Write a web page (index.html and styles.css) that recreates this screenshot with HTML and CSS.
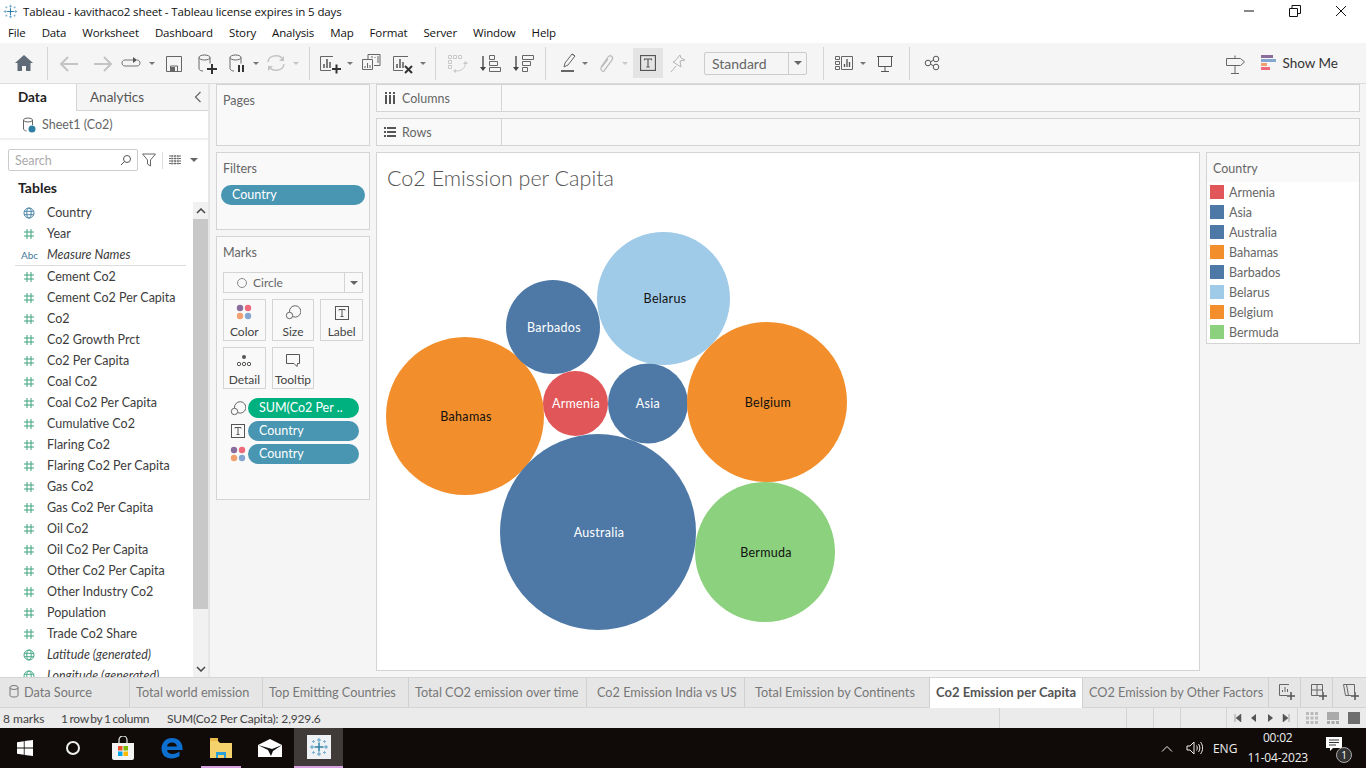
FILE: index.html
```html
<!DOCTYPE html>
<html lang="en">
<head>
  <meta charset="UTF-8" />
  <title>Tableau - kavithaco2 sheet</title>
  <link rel="stylesheet" href="styles.css">
</head>
<body>

  <svg class="defs" width="0" height="0">
    <symbol id="hash" viewBox="0 0 12 12"><path d="M4 1v10M8 1v10M1 4h10M1 8h10" fill="none" stroke="#3fa27f" stroke-width="1"/></symbol>
    <symbol id="globe" viewBox="0 0 12 12"><g fill="none" stroke="currentColor"><circle cx="6" cy="6" r="5"/><ellipse cx="6" cy="6" rx="2.2" ry="5"/><path d="M1 4.3h10M1 7.7h10"/></g></symbol>
    <symbol id="dots" viewBox="0 0 16 16"><circle cx="4" cy="4" r="3.2" fill="#8a6d9c"/><circle cx="12" cy="4" r="3.2" fill="#ef6a7a"/><circle cx="4" cy="12" r="3.2" fill="#f2a06f"/><circle cx="12" cy="12" r="3.2" fill="#84a7d2"/></symbol>
    <symbol id="sizes" viewBox="0 0 16 16"><g fill="none" stroke="#666"><path d="M4.500 8.200a5.700 5.700 0 1 1 3.500 4.500"/><circle cx="4.500" cy="11.500" r="3.200"/></g></symbol>
    <symbol id="tbox" viewBox="0 0 14 14"><rect x=".5" y=".5" width="13" height="13" fill="none" stroke="#555"/><path d="M4 4.500V3.500h6v1M7 3.500v7M5.500 10.500h3" fill="none" stroke="#555"/></symbol>
    <symbol id="cyl" viewBox="0 0 14 20"><g fill="none" stroke="#666"><ellipse cx="6.500" cy="3.500" rx="5.500" ry="2.500"/><path d="M1 3.500v11c0 1.500 2 2.500 4 2.500M12 3.500v6"/></g></symbol>
    <symbol id="tableau" viewBox="0 0 20 20">
      <path d="M10 5.500v9M5.500 10h9" stroke="#2f7fa5" stroke-width="1.500"/>
      <path d="M10 1v4M8 3h4M10 15v4M8 17h4M1 10h4M3 8v4M15 10h4M17 8v4" stroke="#5b9cc4"/>
      <path d="M4.500 3v3M3 4.500h3M15.500 3v3M14 4.500h3M4.500 14v3M3 15.500h3M15.500 14v3M14 15.500h3" stroke="#7fb2cf"/>
    </symbol>
  </svg>

  <div class="titlebar">
    <svg width="15" height="15" class="app-logo"><use href="#tableau" width="15" height="15"/></svg>
    <span class="title-text">Tableau - kavithaco2 sheet - Tableau license expires in 5 days</span>
    <div class="win-btns">
      <svg width="12" height="12" viewBox="0 0 12 12"><path d="M1 6h10" stroke="#111"/></svg>
      <svg width="12" height="12" viewBox="0 0 12 12"><path d="M.5 3.500h8v8h-8zM3 3.500v-3h8.500v8H8.500" fill="none" stroke="#111"/></svg>
      <svg width="12" height="12" viewBox="0 0 12 12"><path d="M1 1l10 10M11 1L1 11" stroke="#111"/></svg>
    </div>
  </div>

  <nav class="menubar">
    <span>File</span><span>Data</span><span>Worksheet</span><span>Dashboard</span><span>Story</span><span>Analysis</span><span>Map</span><span>Format</span><span>Server</span><span>Window</span><span>Help</span>
  </nav>

  <div class="toolbar">
    <svg width="32" height="24" viewBox="0 0 32 24"><path d="M16 4l9 8h-2.500v8h-4.500v-5h-4v5H9.500v-8H7z" fill="#5f6b76"/></svg>
    <i class="sep"></i>
    <svg width="32" height="24" viewBox="0 0 32 24"><path d="M24 13H8M14 6l-7 7 7 7" fill="none" stroke="#c4c4c4" stroke-width="2"/></svg>
    <svg width="32" height="24" viewBox="0 0 32 24"><path d="M8 13h16M18 6l7 7-7 7" fill="none" stroke="#c4c4c4" stroke-width="2"/></svg>
    <svg width="26" height="24" viewBox="0 0 26 24"><path d="M17 9H7c-4 0-4 6 0 6h12c4 0 4-6 0-6" fill="none" stroke="#777"/><path d="M15 6l4 3-4 3z" fill="#555"/></svg>
    <svg class="caret" width="16" height="24" viewBox="0 0 16 24"><path d="M5 11h6l-3 3z" fill="#777"/></svg>
    <svg width="28" height="24" viewBox="0 0 28 24"><path d="M6.500 5.500h15v15h-15zM10.500 20v-5h7v5" fill="none" stroke="#666"/><rect x="11" y="16" width="4" height="4" fill="#666"/></svg>
    <svg width="34" height="24" viewBox="0 0 34 24"><use href="#cyl" x="10" y="3" width="14" height="20"/><path d="M19 18h10M24 13v10" stroke="#333" stroke-width="2"/></svg>
    <svg width="28" height="24" viewBox="0 0 28 24"><use href="#cyl" x="7" y="3" width="14" height="20"/><path d="M17 14v7M21 14v7" stroke="#333" stroke-width="2"/></svg>
    <svg class="caret" width="12" height="24" viewBox="0 0 12 24"><path d="M3 11h6l-3 3z" fill="#777"/></svg>
    <svg width="28" height="24" viewBox="0 0 28 24"><g fill="none" stroke="#c4c4c4" stroke-width="1.500"><path d="M6 11c1-8 13-8 15-2M22 13c-1 8-13 8-15 2"/></g><path d="M22 5v5h-5zM6 20v-5h5z" fill="#c4c4c4"/></svg>
    <svg class="caret" width="12" height="24" viewBox="0 0 12 24"><path d="M3 11h6l-3 3z" fill="#c4c4c4"/></svg>
    <i class="sep"></i>
    <svg width="28" height="24" viewBox="0 0 28 24"><path d="M17 5.500H4.500v14H15" fill="none" stroke="#666"/><path d="M8 17v-4M11 17V8M14 17v-6" stroke="#555" stroke-width="1.500"/><path d="M16 18h9M20.500 13.500v9" stroke="#333" stroke-width="2"/></svg>
    <svg class="caret" width="12" height="24" viewBox="0 0 12 24"><path d="M3 11h6l-3 3z" fill="#777"/></svg>
    <svg width="30" height="24" viewBox="0 0 30 24"><path d="M12 8V3.500h12v11h-6M6.500 8.500h10v10h-10z" fill="none" stroke="#666"/><path d="M16 7V5M19 7V6M22 12V5M9 17v-2M11.500 17v-5M14 17v-3" stroke="#666"/></svg>
    <svg width="32" height="24" viewBox="0 0 32 24"><path d="M22 5.500H7.500v14H17" fill="none" stroke="#666"/><path d="M11 17v-4M14 17V8M17 17v-6" stroke="#555" stroke-width="1.500"/><path d="M19 15l7 7M26 15l-7 7" stroke="#333" stroke-width="2"/></svg>
    <svg class="caret" width="10" height="24" viewBox="0 0 10 24"><path d="M2 11h6l-3 3z" fill="#777"/></svg>
    <i class="sep"></i>
    <svg width="30" height="24" viewBox="0 0 30 24"><g fill="none" stroke="#c9c9c9"><path d="M6.500 4.500h3v3h-3zM11.500 4.500h3v3h-3zM16.500 4.500h3v3h-3zM6.500 9.500h3v3h-3zM6.500 14.500h3v3h-3z"/><path d="M23 11c1 5-2 9-9 9"/></g><path d="M21 13h5l-2.500-3zM14 18v4l-3-2z" fill="#c9c9c9"/></svg>
    <svg width="36" height="24" viewBox="0 0 36 24"><path d="M11 5v13" stroke="#555" stroke-width="1.500"/><path d="M8 16h6l-3 4z" fill="#444"/><path d="M17.500 4.500h5v4h-5zM17.500 10.500h8v4h-8zM17.500 16.500h11v4h-11z" fill="none" stroke="#666"/></svg>
    <svg width="30" height="24" viewBox="0 0 30 24"><path d="M8 5v13" stroke="#555" stroke-width="1.500"/><path d="M5 16h6l-3 4z" fill="#444"/><path d="M14.500 4.500h11v4h-11zM14.500 10.500h8v4h-8zM14.500 16.500h5v4h-5z" fill="none" stroke="#666"/></svg>
    <i class="sep"></i>
    <svg width="28" height="24" viewBox="0 0 28 24"><path d="M12 16l1-4 7-9 3 2-7 9zM20 3l3 2" fill="none" stroke="#666"/><path d="M9 20h13" stroke="#666" stroke-width="2"/></svg>
    <svg class="caret" width="10" height="24" viewBox="0 0 10 24"><path d="M2 11h6l-3 3z" fill="#777"/></svg>
    <svg width="30" height="24" viewBox="0 0 30 24"><path d="M11 16l7-10c2-3 6 0 4 3l-8 11c-1 1-4-1-3-3l7-9" fill="none" stroke="#bdbdbd" stroke-width="1.300"/></svg>
    <svg class="caret" width="10" height="24" viewBox="0 0 10 24"><path d="M2 11h6l-3 3z" fill="#c9c9c9"/></svg>
    <span class="tool-on"><svg width="16" height="16"><use href="#tbox" width="16" height="16"/></svg></span>
    <svg width="28" height="24" viewBox="0 0 28 24"><path d="M8 21l5-6M12 10l5-6 1 3 4 2-5 1 1 6-8-5z" fill="none" stroke="#b5b5b5"/></svg>
    <div class="dropdown"><span>Standard</span><b><i class="tri"></i></b></div>
    <i class="sep"></i>
    <svg width="28" height="24" viewBox="0 0 28 24"><path d="M5.500 5.500h4v3h-4zM5.500 10.500h4v3h-4zM5.500 15.500h4v3h-4zM11.500 5.500h11v13h-11z" fill="none" stroke="#666"/><path d="M14.500 16v-3M17 16V8M19.500 16v-5" stroke="#555" stroke-width="1.300"/></svg>
    <svg class="caret" width="10" height="24" viewBox="0 0 10 24"><path d="M2 11h6l-3 3z" fill="#777"/></svg>
    <svg width="34" height="24" viewBox="0 0 34 24"><path d="M9 5.500h16M10.500 5.500v10h13v-10M17 15.500v5M13 20.500h8" fill="none" stroke="#555"/></svg>
    <i class="sep"></i>
    <svg width="32" height="24" viewBox="0 0 32 24"><g fill="none" stroke="#555"><circle cx="12" cy="12" r="2.800"/><circle cx="20" cy="8" r="2.800"/><circle cx="20" cy="16" r="2.800"/><path d="M14.500 10.700l3-1.400M14.500 13.300l3 1.400"/></g></svg>
    <div class="toolbar-right">
      <svg width="32" height="24" viewBox="0 0 32 24"><path d="M7.500 7.500h14l4 3.500-4 3.500h-14zM16 7.500v-3M16 14.500v8M12 22.500h8" fill="none" stroke="#666"/></svg>
      <div class="show-me">
        <svg width="16" height="16" viewBox="0 0 16 16"><path d="M0 0h12v3H0z" fill="#8a6d9c"/><path d="M0 4h15v3H0z" fill="#84a7d2"/><path d="M0 8h6v3H0z" fill="#f2a06f"/><path d="M0 12h9v3H0z" fill="#ef6a7a"/></svg>
        <span>Show Me</span>
      </div>
    </div>
  </div>

  <main class="workspace">
    <aside class="side">
      <div class="side-tabs">
        <div class="side-tab active">Data</div>
        <div class="side-tab">Analytics
          <svg class="chev" width="8" height="12" viewBox="0 0 8 12"><path d="M6.500 1L1.500 6l5 5" fill="none" stroke="#666" stroke-width="1.200"/></svg>
        </div>
      </div>
      <div class="source">
        <svg width="14" height="16" viewBox="0 0 14 16"><g fill="none" stroke="#666"><ellipse cx="6" cy="3" rx="4.500" ry="2"/><path d="M1.500 3v9c0 1 2 2 3 2M10.500 3v5"/></g><circle cx="10" cy="12" r="3.500" fill="#2f7fa5"/></svg>
        <span>Sheet1 (Co2)</span>
      </div>
      <div class="search-row">
        <div class="search"><span>Search</span>
          <svg width="12" height="12" viewBox="0 0 12 12"><circle cx="7" cy="5" r="3.500" fill="none" stroke="#555"/><path d="M4.500 7.500L1 11" stroke="#555"/></svg>
        </div>
        <svg width="14" height="14" viewBox="0 0 14 14"><path d="M.5 1h13L8.500 7v6l-3-2V7z" fill="none" stroke="#666"/></svg>
        <i class="search-sep"></i>
        <svg width="12" height="10" viewBox="0 0 12 10"><path d="M0 1h12M0 3.500h12M0 6h12M0 8.500h12M3 0v10M6 0v10M9 0v10" stroke="#666" stroke-dasharray="2 .5"/></svg>
        <i class="tri side-tri"></i>
      </div>
      <div class="tables-head">Tables</div>
      <div class="field-wrap">
        <ul class="fields">
          <li><svg class="ic blue"><use href="#globe"/></svg>Country</li>
          <li><svg class="ic"><use href="#hash"/></svg>Year</li>
          <li class="it rule"><span class="abc">Abc</span>Measure Names</li>
          <li><svg class="ic"><use href="#hash"/></svg>Cement Co2</li>
          <li><svg class="ic"><use href="#hash"/></svg>Cement Co2 Per Capita</li>
          <li><svg class="ic"><use href="#hash"/></svg>Co2</li>
          <li><svg class="ic"><use href="#hash"/></svg>Co2 Growth Prct</li>
          <li><svg class="ic"><use href="#hash"/></svg>Co2 Per Capita</li>
          <li><svg class="ic"><use href="#hash"/></svg>Coal Co2</li>
          <li><svg class="ic"><use href="#hash"/></svg>Coal Co2 Per Capita</li>
          <li><svg class="ic"><use href="#hash"/></svg>Cumulative Co2</li>
          <li><svg class="ic"><use href="#hash"/></svg>Flaring Co2</li>
          <li><svg class="ic"><use href="#hash"/></svg>Flaring Co2 Per Capita</li>
          <li><svg class="ic"><use href="#hash"/></svg>Gas Co2</li>
          <li><svg class="ic"><use href="#hash"/></svg>Gas Co2 Per Capita</li>
          <li><svg class="ic"><use href="#hash"/></svg>Oil Co2</li>
          <li><svg class="ic"><use href="#hash"/></svg>Oil Co2 Per Capita</li>
          <li><svg class="ic"><use href="#hash"/></svg>Other Co2 Per Capita</li>
          <li><svg class="ic"><use href="#hash"/></svg>Other Industry Co2</li>
          <li><svg class="ic"><use href="#hash"/></svg>Population</li>
          <li><svg class="ic"><use href="#hash"/></svg>Trade Co2 Share</li>
          <li class="it"><svg class="ic green"><use href="#globe"/></svg>Latitude (generated)</li>
          <li class="it"><svg class="ic green"><use href="#globe"/></svg>Longitude (generated)</li>
        </ul>
        <div class="scroll">
          <div class="scroll-btn"><svg width="10" height="6" viewBox="0 0 10 6"><path d="M1 5l4-4 4 4" fill="none" stroke="#444" stroke-width="1.500"/></svg></div>
          <div class="scroll-thumb"></div>
          <div class="scroll-btn"><svg width="10" height="6" viewBox="0 0 10 6"><path d="M1 1l4 4 4-4" fill="none" stroke="#444" stroke-width="1.500"/></svg></div>
        </div>
      </div>
    </aside>

    <section class="cards">
      <div class="card card-pages"><div class="card-title">Pages</div></div>
      <div class="card card-filters">
        <div class="card-title">Filters</div>
        <div class="pill pill-wide">Country</div>
      </div>
      <div class="card card-marks">
        <div class="card-title">Marks</div>
        <div class="mark-type">
          <svg width="12" height="12" viewBox="0 0 12 12"><circle cx="6" cy="6" r="4.500" fill="none" stroke="#888"/></svg>
          <span>Circle</span><b><i class="tri"></i></b>
        </div>
        <div class="mark-grid">
          <div class="mark-btn"><svg width="16" height="16"><use href="#dots"/></svg>Color</div>
          <div class="mark-btn"><svg width="16" height="16"><use href="#sizes"/></svg>Size</div>
          <div class="mark-btn"><svg width="14" height="14"><use href="#tbox"/></svg>Label</div>
          <div class="mark-btn"><svg width="16" height="16" viewBox="0 0 16 16"><circle cx="8" cy="5" r="2" fill="#555"/><g fill="none" stroke="#555"><circle cx="3" cy="12" r="1.700"/><circle cx="8" cy="12" r="1.700"/><circle cx="13" cy="12" r="1.700"/></g></svg>Detail</div>
          <div class="mark-btn"><svg width="16" height="16" viewBox="0 0 16 16"><path d="M1.500 2.500h13v9h-2l-.5 3-3-3h-7.500z" fill="none" stroke="#555"/></svg>Tooltip</div>
        </div>
        <div class="encodings">
          <div class="enc"><svg width="16" height="16"><use href="#sizes"/></svg><div class="pill pill-green">SUM(Co2 Per ..</div></div>
          <div class="enc"><svg width="14" height="14"><use href="#tbox"/></svg><div class="pill">Country</div></div>
          <div class="enc"><svg width="16" height="16"><use href="#dots"/></svg><div class="pill">Country</div></div>
        </div>
      </div>
    </section>

    <section class="right">
      <div class="shelf">
        <div class="shelf-label"><svg width="12" height="12" viewBox="0 0 12 12"><path d="M2 3v9M6 3v9M10 3v9" stroke="#555" stroke-width="2"/><path d="M2 0v2M6 0v2M10 0v2" stroke="#555" stroke-width="2"/></svg>Columns</div>
      </div>
      <div class="shelf">
        <div class="shelf-label"><svg width="12" height="12" viewBox="0 0 12 12"><path d="M3 2h9M3 6h9M3 10h9" stroke="#555" stroke-width="2"/><path d="M0 2h2M0 6h2M0 10h2" stroke="#555" stroke-width="2"/></svg>Rows</div>
      </div>
      <div class="stage">
        <div class="view">
          <h1 class="view-title">Co2 Emission per Capita</h1>
          <svg class="bubbles" width="822" height="468" viewBox="377 203 822 468">
            <circle cx="465" cy="416" r="79" fill="#f28e2b"/><text x="466" y="421" class="dark">Bahamas</text>
            <circle cx="663.500" cy="298.500" r="66.500" fill="#a0cbe8"/><text x="665" y="303" class="dark">Belarus</text>
            <circle cx="553" cy="327" r="47" fill="#4e79a7"/><text x="554" y="332">Barbados</text>
            <circle cx="575.500" cy="403.500" r="32.500" fill="#e15759"/><text x="576" y="408">Armenia</text>
            <circle cx="648" cy="403.500" r="40" fill="#4e79a7"/><text x="648" y="408">Asia</text>
            <circle cx="767" cy="402" r="80" fill="#f28e2b"/><text x="768" y="407" class="dark">Belgium</text>
            <circle cx="598" cy="532" r="98" fill="#4e79a7"/><text x="599" y="537">Australia</text>
            <circle cx="765" cy="552" r="70" fill="#8cd17d"/><text x="766" y="557" class="dark">Bermuda</text>
          </svg>
        </div>
        <div class="legend">
          <div class="legend-title">Country</div>
          <ul class="legend-list">
            <li><i class="sw red"></i>Armenia</li>
            <li><i class="sw blue"></i>Asia</li>
            <li><i class="sw blue"></i>Australia</li>
            <li><i class="sw orange"></i>Bahamas</li>
            <li><i class="sw blue"></i>Barbados</li>
            <li><i class="sw light"></i>Belarus</li>
            <li><i class="sw orange"></i>Belgium</li>
            <li><i class="sw green"></i>Bermuda</li>
          </ul>
        </div>
      </div>
    </section>
  </main>

  <div class="tabs">
    <div class="tab tab-source"><svg width="10" height="13" viewBox="0 0 10 13"><g fill="none" stroke="#777"><ellipse cx="5" cy="2.500" rx="4" ry="2"/><path d="M1 2.500v8c0 2 8 2 8 0v-8"/></g></svg>Data Source</div>
    <div class="tab t1">Total world emission</div>
    <div class="tab t2">Top Emitting Countries</div>
    <div class="tab t3">Total CO2 emission over time</div>
    <div class="tab t4">Co2 Emission India vs US</div>
    <div class="tab t5">Total Emission by Continents</div>
    <div class="tab active t6">Co2 Emission per Capita</div>
    <div class="tab t7">CO2 Emission by Other Factors</div>
    <div class="tab tab-add"><svg width="18" height="18" viewBox="0 0 18 18"><path d="M11 1.500H1.500v11H9" fill="none" stroke="#666"/><path d="M4.500 9V7M7 9V4M9.500 9V6" stroke="#666"/><path d="M9 13h8M13 9v8" stroke="#555" stroke-width="1.500"/></svg></div>
    <div class="tab tab-add"><svg width="18" height="18" viewBox="0 0 18 18"><path d="M9 12.500H1.500v-11h11V9M7 1.500v11M1.500 7h11" fill="none" stroke="#666"/><path d="M9 13h8M13 9v8" stroke="#555" stroke-width="1.500"/></svg></div>
    <div class="tab tab-add"><svg width="18" height="18" viewBox="0 0 18 18"><path d="M9 12.500H3.500l-2-11h11V9M4.500 1.500l2 11" fill="none" stroke="#666"/><path d="M9 13h8M13 9v8" stroke="#555" stroke-width="1.500"/></svg></div>
  </div>

  <div class="statusbar">
    <div class="st st-main"><span>8 marks</span><span>1 row by 1 column</span><span>SUM(Co2 Per Capita): 2,929.6</span></div>
    <div class="st st-a"></div>
    <div class="st st-b"></div>
    <div class="st st-b"></div>
    <div class="st st-c"></div>
    <div class="st st-nav">
      <svg width="8" height="8" viewBox="0 0 8 8"><path d="M1 0v8M7 0v8L2 4z" fill="#555" stroke="#555" stroke-width=".5"/></svg>
      <svg width="8" height="8" viewBox="0 0 8 8"><path d="M6 0v8L1 4z" fill="#555"/></svg>
      <svg width="8" height="8" viewBox="0 0 8 8"><path d="M2 0v8l5-4z" fill="#555"/></svg>
      <svg width="8" height="8" viewBox="0 0 8 8"><path d="M7 0v8M1 0v8l5-4z" fill="#555" stroke="#555" stroke-width=".5"/></svg>
    </div>
    <div class="st st-views">
      <svg width="12" height="12" viewBox="0 0 12 12"><path d="M0 1.500h12M0 6h12M0 10.500h12" stroke="#bbb" stroke-width="3" stroke-dasharray="3 1.500"/></svg>
      <svg width="12" height="12" viewBox="0 0 12 12"><rect width="12" height="8" fill="#aaa"/><path d="M0 10.500h12" stroke="#aaa" stroke-width="3" stroke-dasharray="3 1.500"/></svg>
      <svg width="12" height="12" viewBox="0 0 12 12"><rect width="12" height="12" fill="#6e6e6e"/></svg>
    </div>
  </div>

  <footer class="taskbar">
    <div class="task-left">
      <div class="task"><svg width="16" height="16" viewBox="0 0 16 16"><path d="M0 2.200l6.800-1v6.400H0zM7.600 1.100L16 0v7.600H7.600zM0 8.400h6.800v6.400l-6.800-1zM7.600 8.400H16V16l-8.400-1.100z" fill="#fff"/></svg></div>
      <div class="task"><svg width="16" height="16" viewBox="0 0 16 16"><circle cx="7" cy="8" r="6" fill="none" stroke="#eee" stroke-width="2"/></svg></div>
      <div class="task"><svg width="24" height="24" viewBox="0 0 24 24"><path d="M1 7h22v15a2 2 0 0 1-2 2H3a2 2 0 0 1-2-2z" fill="#f4f4f4"/><path d="M8 8V4a4 4 0 0 1 8 0v4" fill="none" stroke="#eee" stroke-width="1.200"/><rect x="7" y="10" width="4.500" height="4.500" fill="#e8512a"/><rect x="12.500" y="10" width="4.500" height="4.500" fill="#7db800"/><rect x="7" y="15.500" width="4.500" height="4.500" fill="#00a4ef"/><rect x="12.500" y="15.500" width="4.500" height="4.500" fill="#ffb900"/></svg></div>
      <div class="task"><svg width="22" height="22" viewBox="0 0 22 22"><path d="M11 1C5 1 1 5 .5 11c0 7 4 10.500 10 10.500 3 0 6-1 8-2.500v-4.500c-2 1.500-4.500 2.500-7 2.500-3 0-5-1.500-5.500-4H21.500V11C21.500 5 17 1 11 1zM6 9.500c.3-2.500 2.500-4 5-4s4.700 1.500 5 4z" fill="#0d6fd0"/></svg></div>
      <div class="task open"><svg width="22" height="20" viewBox="0 0 22 20"><path d="M0 3h8l2 2h12v15H0z" fill="#f6d26c"/><path d="M0 0h8v3H0z" fill="#e8bb4c"/><path d="M6 14h10v6h-2v-3H8v3H6z" fill="#2b9fd8"/></svg></div>
      <div class="task"><svg width="24" height="18" viewBox="0 0 24 18"><path d="M0 6L12 0l12 6v12H0z" fill="#fff"/><path d="M0 6l14 4 10-4-9 6-2 5-3-6z" fill="#111"/></svg></div>
      <div class="task task-on"><span class="tb-icon"><svg width="20" height="20"><use href="#tableau" width="20" height="20"/></svg></span></div>
    </div>
    <div class="task-right">
      <svg width="12" height="7" viewBox="0 0 12 7"><path d="M1 6.500l5-5 5 5" fill="none" stroke="#eee"/></svg>
      <svg class="vol" width="17" height="14" viewBox="0 0 17 14"><path d="M1 5h3l4-4v12l-4-4H1zM10.500 4.500c1 1.500 1 3.500 0 5M12.500 3c1.800 2.500 1.800 5.500 0 8M14.500 1c2.800 3.500 2.800 8.500 0 12" fill="none" stroke="#eee"/></svg>
      <span class="lang">ENG</span>
      <div class="clock"><div>00:02</div><div>11-04-2023</div></div>
      <div class="notif">
        <svg width="16" height="14" viewBox="0 0 16 14"><path d="M0 0h16v11h-9l-3 3v-3H0z" fill="#fff"/><path d="M3 3h10M3 5.500h10M3 8h7" stroke="#333"/></svg>
        <span class="badge">1</span>
      </div>
    </div>
  </footer>

</body>
</html>
```

FILE: styles.css
```css
* {
  box-sizing: border-box;
  margin: 0;
  padding: 0;
}

html, body {
  width: 1366px;
  height: 768px;
  overflow: hidden;
}

body {
  background: #fff;
  font-family: 'Lato', sans-serif;
  font-size: 12.5px;
  color: #444;
  display: flex;
  flex-direction: column;
}

ul { list-style: none; }
i { font-style: normal; }

.defs { position: absolute; }

/* window chrome */
.titlebar {
  height: 22px;
  display: flex;
  align-items: center;
  padding-left: 3px;
  font-family: 'Open Sans', sans-serif;
  font-size: 11.5px;
  color: #111;
}

.app-logo { margin-right: 5px; }

.title-text { letter-spacing: -0.13px; }

.win-btns {
  margin-left: auto;
  display: flex;
  gap: 34px;
  padding-right: 19px;
}

.menubar {
  height: 21px;
  display: flex;
  align-items: center;
  gap: 16px;
  padding-left: 8px;
  font-family: 'Open Sans', sans-serif;
  font-size: 11.5px;
  color: #111;
  letter-spacing: -0.14px;
}

.toolbar {
  height: 41px;
  flex: none;
  background: #f5f5f5;
  border-bottom: 1px solid #dcdcdc;
  display: flex;
  align-items: center;
  padding-left: 8px;
}

.sep {
  width: 14px;
  height: 33px;
  flex: none;
  background: linear-gradient(#d4d4d4, #d4d4d4) center / 1px 100% no-repeat;
}

.tool-on {
  width: 30px;
  height: 30px;
  margin-left: 3px;
  background: #e4e4e4;
  display: flex;
  align-items: center;
  justify-content: center;
}

.dropdown {
  width: 103px;
  height: 23px;
  margin-left: 13px;
  margin-right: 9px;
  border: 1px solid #ccc;
  border-radius: 2px;
  display: flex;
  align-items: center;
  font-size: 14px;
  color: #666;
}

.dropdown span { flex: 1; padding-left: 7px; }

.dropdown b {
  width: 18px;
  height: 100%;
  border-left: 1px solid #ccc;
  display: flex;
  align-items: center;
  justify-content: center;
}

.tri {
  width: 0;
  height: 0;
  border-left: 4px solid transparent;
  border-right: 4px solid transparent;
  border-top: 4px solid #666;
}

.toolbar-right {
  margin-left: auto;
  display: flex;
  align-items: center;
  padding-right: 28px;
}

.show-me {
  display: flex;
  align-items: center;
  gap: 5px;
  margin-left: 10px;
  font-size: 13.5px;
  color: #333;
}

/* main area */
.workspace {
  flex: none;
  height: 594px;
  display: flex;
  background: #f5f5f5;
  border-bottom: 1px solid #d4d4d4;
}

.side {
  width: 210px;
  flex: none;
  background: #fff;
  border-right: 2px solid #e6e6e6;
  display: flex;
  flex-direction: column;
}

.side-tabs {
  height: 27px;
  display: flex;
  flex: none;
  font-size: 13.5px;
  border-bottom: 1px solid #d4d4d4;
  background: #f5f5f5;
}

.side-tab {
  flex: 1;
  padding: 5px 0 0 13px;
  position: relative;
  color: #555;
}

.side-tab.active {
  flex: 0 0 77px;
  padding-left: 18px;
  background: #fff;
  font-weight: 700;
  color: #222;
  border-right: 1px solid #d4d4d4;
  height: 27px;
}

.chev {
  position: absolute;
  right: 6px;
  top: 7px;
}

.source {
  height: 29px;
  flex: none;
  display: flex;
  align-items: center;
  gap: 6px;
  padding-left: 22px;
  color: #666;
  border-bottom: 2px solid #f0f0f0;
}

.search-row {
  height: 40px;
  flex: none;
  display: flex;
  align-items: center;
  padding-left: 8px;
}

.search {
  width: 130px;
  height: 22px;
  border: 1px solid #ccc;
  border-radius: 2px;
  display: flex;
  align-items: center;
  justify-content: space-between;
  padding: 0 5px 0 6px;
  color: #aaa;
  margin-right: 4px;
}

.search-sep {
  width: 1px;
  height: 17px;
  background: #ddd;
  margin: 0 6px;
}

.side-tri { margin-left: 9px; }

.tables-head {
  height: 23px;
  flex: none;
  margin-top: -1px;
  padding-left: 18px;
  font-size: 14px;
  font-weight: 700;
  color: #222;
}

.field-wrap {
  flex: 1;
  display: flex;
  overflow: hidden;
  min-height: 0;
}

.fields {
  flex: 1;
  min-width: 0;
  height: 475px;
  overflow: hidden;
}

.fields li {
  height: 21px;
  display: flex;
  align-items: center;
  color: #3c3c3c;
  white-space: nowrap;
}

.fields .it { font-style: italic; }

.fields .rule { border-bottom: 1px solid #ddd; margin: 0 7px 0 15px; height: 22px; }
.fields .rule .abc { width: 32px; }

.ic {
  width: 12px;
  height: 12px;
  margin: 0 12px 0 23px;
  flex: none;
  color: #4a86a8;
}

.ic.green { color: #49ab8a; }

.abc {
  flex: none;
  font-style: normal;
  font-size: 10px;
  color: #3f7a9c;
  padding-left: 6px;
}

.scroll {
  width: 15px;
  flex: none;
  background: #f1f1f1;
  display: flex;
  flex-direction: column;
}

.scroll-btn {
  height: 17px;
  flex: none;
  display: flex;
  align-items: center;
  justify-content: center;
}

.scroll-thumb {
  height: 390px;
  background: #c8c8c8;
}

.scroll-btn:last-child { margin-top: auto; }

.cards {
  width: 154px;
  flex: none;
  margin: 0 6px;
  display: flex;
  flex-direction: column;
  gap: 6px;
}

.card {
  background: #f9f9f9;
  border: 1px solid #d4d4d4;
  padding: 8px 6px 0 6px;
}

.card-title { color: #666; line-height: 16px; }

.card-pages { height: 62px; }
.card-filters { height: 78px; }
.card-marks { height: 264px; }

.pill {
  height: 20px;
  flex: 1;
  border-radius: 10px;
  background: #4996b2;
  color: #fff;
  padding-left: 11px;
  line-height: 20px;
  white-space: nowrap;
}

.pill-wide { margin: 8px -2px 0 -2px; }
.pill-green { background: #00b180; }

.mark-type {
  height: 21px;
  margin: 11px 0 6px 0;
  border: 1px solid #d4d4d4;
  display: flex;
  align-items: center;
  padding-left: 12px;
  color: #666;
  font-size: 12px;
  gap: 2px;
}

.mark-type span { flex: 1; padding-left: 3px; }

.mark-type b {
  width: 18px;
  height: 100%;
  border-left: 1px solid #d4d4d4;
  display: flex;
  align-items: center;
  justify-content: center;
}

.mark-grid {
  display: grid;
  grid-template-columns: repeat(3, 1fr);
  grid-auto-rows: 42px;
  column-gap: 6px;
  row-gap: 6px;
}

.mark-btn {
  border: 1px solid #d4d4d4;
  display: flex;
  flex-direction: column;
  align-items: center;
  justify-content: flex-end;
  gap: 4px;
  padding-bottom: 1px;
  font-size: 12px;
  color: #444;
}

.encodings {
  margin-top: 9px;
  display: flex;
  flex-direction: column;
  gap: 3px;
}

.enc {
  display: flex;
  align-items: center;
  gap: 2px;
  padding-left: 7px;
  margin-right: 4px;
}

.enc svg { width: 16px; flex: none; }

.right {
  flex: 1;
  min-width: 0;
  padding-right: 6px;
  display: flex;
  flex-direction: column;
  gap: 6px;
}

.shelf {
  height: 28px;
  flex: none;
  background: #f9f9f9;
  border: 1px solid #d4d4d4;
  display: flex;
}

.shelf-label {
  width: 125px;
  border-right: 1px solid #d4d4d4;
  display: flex;
  align-items: center;
  gap: 6px;
  padding-left: 7px;
  color: #666;
}

.stage {
  flex: 1;
  display: flex;
  gap: 6px;
  min-height: 0;
  align-items: flex-start;
}

.view {
  width: 824px;
  height: 519px;
  background: #fff;
  border: 1px solid #d4d4d4;
}

.view-title {
  height: 50px;
  padding: 12px 0 0 10px;
  font-size: 21.5px;
  font-weight: 300;
  color: #555;
  line-height: 26px;
}

.bubbles { display: block; }

.bubbles text {
  font-family: 'Lato', sans-serif;
  font-size: 12.5px;
  letter-spacing: 0.3px;
  fill: #fff;
  text-anchor: middle;
}

.bubbles text.dark { fill: #111; }

.legend {
  width: 154px;
  height: 192px;
  background: #fff;
  border: 1px solid #d4d4d4;
}

.legend-title {
  height: 29px;
  background: #f9f9f9;
  color: #666;
  padding: 8px 0 0 6px;
}

.legend-list li {
  height: 20px;
  display: flex;
  align-items: center;
  gap: 5px;
  padding-left: 3px;
  color: #666;
}

.sw { width: 14px; height: 14px; }
.sw.red { background: #e15759; }
.sw.blue { background: #4e79a7; }
.sw.orange { background: #f28e2b; }
.sw.light { background: #a0cbe8; }
.sw.green { background: #8cd17d; }

/* bottom bars */
.tabs {
  height: 30px;
  flex: none;
  display: flex;
  background: #e6e6e6;
  border-bottom: 1px solid #d4d4d4;
  color: #777;
}

.tab {
  border-right: 1px solid #d0d0d0;
  display: flex;
  align-items: center;
  padding: 0 0 2px 6px;
  white-space: nowrap;
  font-size: 12.7px;
}

.tab-source { width: 130px; gap: 5px; padding-left: 9px; }
.t1 { width: 133px; }
.t2 { width: 146px; }
.t3 { width: 178px; }
.t4 { width: 158px; padding-left: 10px; }
.t5 { width: 185px; padding-left: 10px; }
.t6 { width: 153px; }
.t7 { width: 186px; }

.tab.active {
  background: #fff;
  font-size: 13px;
  font-weight: 700;
  color: #555;
  margin-bottom: -1px;
  padding-bottom: 3px;
}

.tab-add {
  width: 32px;
  padding-left: 9px;
}

.tab-add:last-child { border-right: 0; }

.statusbar {
  height: 20px;
  flex: none;
  display: flex;
  background: #ebebeb;
  font-size: 12px;
  color: #444;
}

.st {
  border-right: 1px solid #d4d4d4;
  display: flex;
  align-items: center;
}

.st-main { width: 1000px; gap: 12px; padding-left: 3px; white-space: nowrap; }
.st-main span:nth-child(1) { width: 46px; }
.st-main span:nth-child(2) { width: 94px; letter-spacing: -0.3px; word-spacing: -1px; }
.st-main span:nth-child(3) { letter-spacing: -0.15px; }

.st-a { width: 127px; }
.st-b { width: 27px; }
.st-c { width: 46px; }
.st-nav { width: 71px; justify-content: center; gap: 8px; }

.st-views {
  flex: 1;
  border-right: 0;
  justify-content: flex-start;
  gap: 9px;
  padding-left: 8px;
}

.taskbar {
  height: 40px;
  flex: none;
  background: #100b08;
  display: flex;
  justify-content: space-between;
  color: #eee;
  font-family: 'Open Sans', sans-serif;
  font-size: 12px;
}

.task-left { display: flex; }

.task {
  width: 49px;
  height: 40px;
  display: flex;
  align-items: center;
  justify-content: center;
}

.task.open {
  background: linear-gradient(#d9a0e0, #d9a0e0) center bottom / 40px 2px no-repeat;
}

.task-on {
  background: #403b39;
  border-bottom: 2px solid #d9a0e0;
}

.tb-icon {
  width: 24px;
  height: 24px;
  background: #eef2f4;
  display: flex;
  align-items: center;
  justify-content: center;
}

.task-right {
  display: flex;
  align-items: center;
  padding-right: 18px;
}

.vol { margin-left: 13px; }
.lang { margin-left: 10px; }

.clock {
  margin-left: 10px;
  text-align: center;
  line-height: 20px;
  letter-spacing: -0.2px;
}

.notif {
  position: relative;
  margin-left: 18px;
  width: 22px;
  height: 22px;
}

.badge {
  position: absolute;
  right: -4px;
  bottom: -4px;
  width: 16px;
  height: 16px;
  border-radius: 50%;
  border: 1px solid #aaa;
  background: #333;
  color: #fff;
  font-size: 10px;
  line-height: 14px;
  text-align: center;
}
```
